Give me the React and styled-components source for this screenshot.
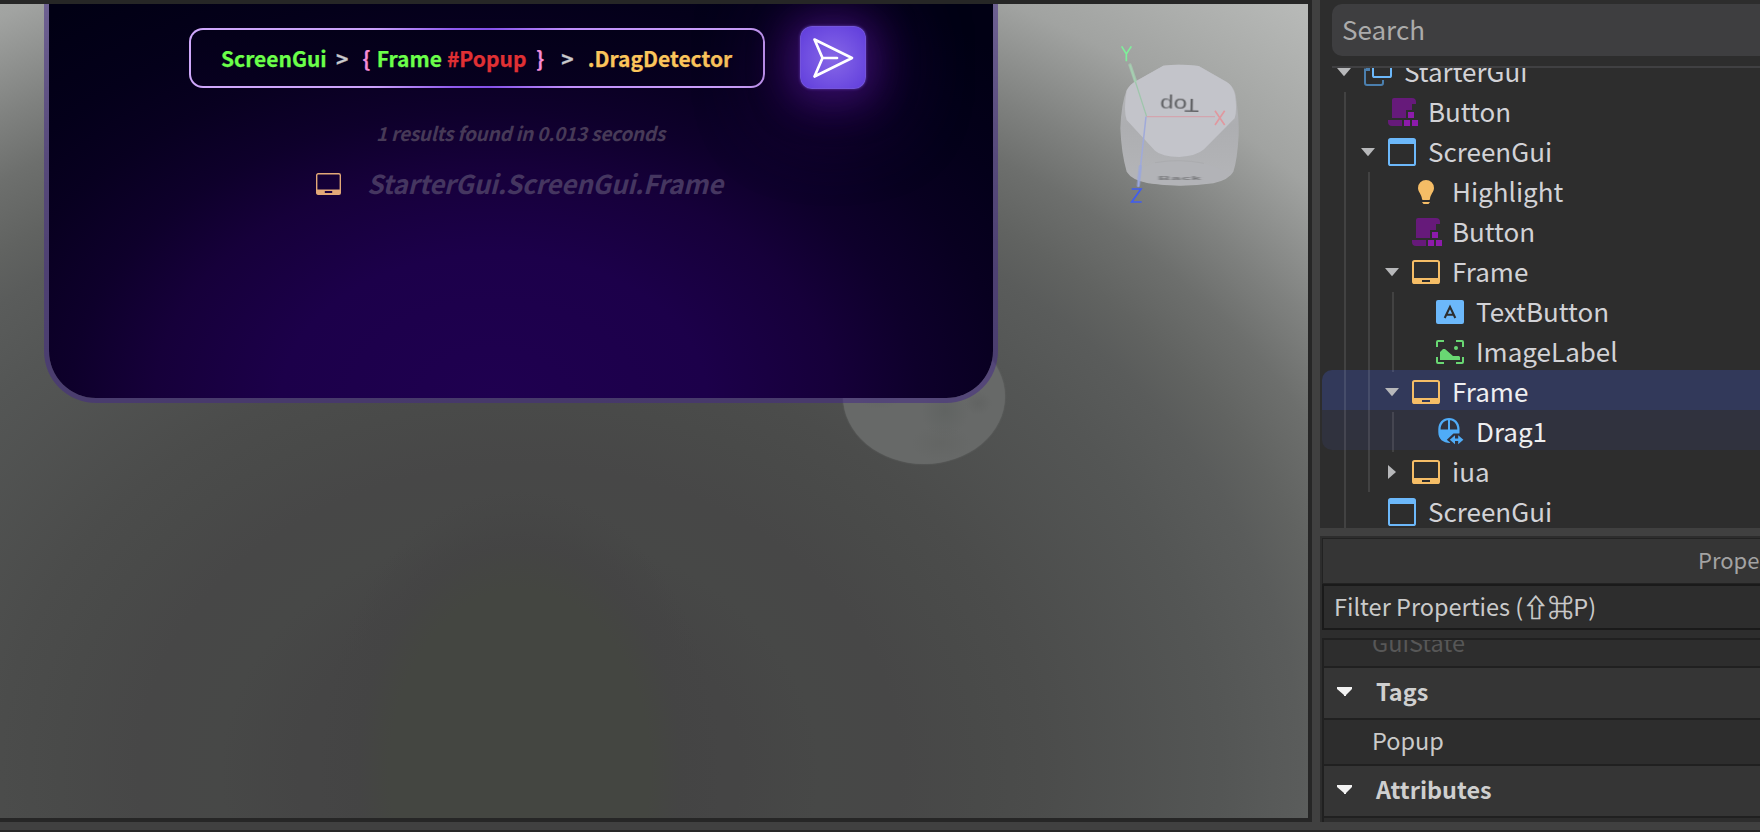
import React from 'react';
import styled, { createGlobalStyle, css } from 'styled-components';

const GlobalStyle = createGlobalStyle`
  * { box-sizing: border-box; }
  body {
    margin: 0;
    overflow: hidden;
    background: #404040;
    font-family: "Noto Sans CJK SC", "Noto Sans", sans-serif;
  }
  svg { display: block; flex: none; }
`;

/* ---------- shell ---------- */

const Shell = styled.div`
  width: 1760px;
  height: 832px;
  display: flex;
  flex-direction: column;
  overflow: hidden;
`;

const Workspace = styled.div`
  height: 822px;
  display: flex;
`;

const StatusEdge = styled.div`
  height: 10px;
  background: #404040;
  border-bottom: 2px solid #282828;
`;

const ViewportFrame = styled.section`
  width: 1312px;
  padding: 4px 4px 4px 0;
  background: #262626;
`;

const Viewport = styled.div`
  position: relative;
  height: 814px;
  overflow: hidden;
  background:
    radial-gradient(ellipse 180px 250px at 520px 766px, #444641 0%, #444641 72%, rgba(68, 68, 68, 0.9) 90%, rgba(70, 70, 70, 0) 112%),
    radial-gradient(
      ellipse 1000px 800px at 520px 766px,
      #454545 0%, #454545 22%, #474847 30%, #474747 38%, #494a49 46%,
      #4b4c4b 52%, #545655 70%, #5a5c5b 78%, #616361 83%, #6d6f6d 90%, #7f817f 96.5%,
      #a1a3a1 107.5%, #b7b9b7 123%
    );
`;

const Moon = styled.div`
  position: absolute;
  left: 843px;
  top: 325px;
  width: 162px;
  height: 135px;
  border-radius: 50%;
  background:
    radial-gradient(ellipse 24px 26px at 102px 82px, rgba(92, 96, 94, 0.6), transparent),
    radial-gradient(ellipse 14px 12px at 135px 74px, rgba(92, 94, 93, 0.5), transparent),
    radial-gradient(ellipse 24px 14px at 36px 66px, rgba(92, 96, 94, 0.5), transparent),
    radial-gradient(ellipse 30px 18px at 98px 114px, rgba(96, 98, 96, 0.5), transparent),
    #676968;
  box-shadow: 0 0 2px #676968;
`;

const ViewCube = styled.svg`
  position: absolute;
  left: 1080px;
  top: 16px;
`;

/* ---------- query panel ---------- */

const QueryPanel = styled.div`
  position: relative;
  width: 954px;
  height: 399px;
  margin-left: 44px;
  padding-top: 22px;
  overflow: hidden;
  border: 5px solid rgba(69, 43, 136, 0.54);
  border-top: 0;
  border-radius: 0 0 52px 52px;
  background: radial-gradient(
      ellipse 530px 360px at 445px 100%,
      #1f0050 0%, #1c004a 40%, #16003a 64%, #0e002b 80%, #080020 97%, #04001a 112%, #010014 135%
    ) padding-box;
`;

const QueryRow = styled.div`
  display: flex;
  align-items: center;
  gap: 35px;
  padding-left: 140px;
  height: 63px;
`;

const QueryInput = styled.div`
  width: 576px;
  height: 60px;
  display: flex;
  align-items: center;
  padding-left: 30px;
  border: 2px solid transparent;
  border-radius: 14px;
  background:
    linear-gradient(#040019, #07001f) padding-box,
    linear-gradient(90deg, #cfa8fb 0%, #cba2fb 32%, #8f5aee 46%, #8450ea 52%, #c08ffb 66%, #cda4fb 100%) border-box;
  font-size: 21px;
  font-weight: 700;
  line-height: 30px;
`;

const tokenColors = {
  cls: '#6bff4a',
  op: '#c9c9cc',
  brace: '#f58bd6',
  tag: '#e03034',
  prop: '#fbc55b',
};

const Token = styled.span`
  flex: none;
  width: ${(p) => p.$w}px;
  color: ${(p) => tokenColors[p.$kind]};
  -webkit-text-stroke: 0.25px currentColor;
  white-space: nowrap;
`;

const SendButton = styled.button`
  width: 66px;
  height: 63px;
  padding: 0;
  display: flex;
  align-items: center;
  justify-content: center;
  border: 1px solid rgba(120, 90, 215, 0.7);
  border-radius: 12px;
  background: radial-gradient(circle at 50% 52%, #8767e6 0%, #7352e2 50%, #5f3cdb 100%);
  box-shadow: 0 0 3px rgba(110, 70, 200, 0.8), 0 3px 38px 9px rgba(84, 22, 150, 0.52), 0 6px 80px 26px rgba(64, 10, 116, 0.4);
`;

const ResultCount = styled.p`
  margin: 29px 0 0 327px;
  font-size: 19px;
  line-height: 30px;
  font-style: italic;
  font-weight: 700;
  color: #473a57;
  letter-spacing: -0.23px;
  white-space: nowrap;
`;

const ResultRow = styled.div`
  display: flex;
  align-items: center;
  gap: 26px;
  height: 40px;
  margin: 16px 0 0 267px;
`;

const ResultPath = styled.span`
  font-size: 26px;
  line-height: 38px;
  padding-bottom: 2px;
  font-style: italic;
  font-weight: 700;
  color: #453660;
  letter-spacing: -0.2px;
  white-space: nowrap;
`;

/* ---------- sidebar ---------- */

const Sidebar = styled.aside`
  width: 448px;
  border-left: 8px solid #404040;
  display: flex;
  flex-direction: column;
  background: #2d2d2d;
  overflow: hidden;
`;

const SearchBox = styled.div`
  flex: none;
  width: 600px;
  height: 52px;
  margin: 4px 0 10px 12px;
  padding-left: 10px;
  border-radius: 10px;
  background: #3e3e40;
  color: #ababab;
  font-size: 26px;
  line-height: 50px;
`;

const Tree = styled.div`
  flex: none;
  height: 462px;
  overflow: hidden;
`;

const TreeTop = styled.div`
  height: 2px;
  margin-left: 12px;
  background: #404042;
`;

const TreeClip = styled.div`
  height: 460px;
  overflow: hidden;
`;

const TreeRows = styled.div`
  margin-top: -18px;
`;

const Row = styled.div`
  height: 40px;
  margin-left: 2px;
  padding: 0 0 0 10px;
  display: flex;
  color: ${(p) => (p.$tone ? '#eeeef0' : '#d2d2d6')};
  ${(p) => p.$tone === 'selected' && css`background: #32395a; border-radius: 10px 0 0 0;`}
  ${(p) => p.$tone === 'child' && css`background: #30323e; border-radius: 0 0 0 10px;`}
`;

const Guide = styled.span`
  position: relative;
  top: 2px;
  flex: none;
  width: 2px;
  height: 40px;
  margin: 0 10px 0 12px;
  background: rgba(255, 255, 255, 0.1);
`;

const ArrowCell = styled.span`
  flex: none;
  width: 32px;
  height: 44px;
  padding-left: 5px;
  display: flex;
  align-items: center;
`;

const IconCell = styled.span`
  flex: none;
  width: 40px;
  padding-top: 8px;
`;

const Label = styled.span`
  font-size: 26px;
  line-height: 41px;
  white-space: nowrap;
`;

/* ---------- properties ---------- */

const Properties = styled.div`
  flex: 1;
  min-height: 0;
  border-top: 8px solid #404040;
  padding: 2px 0 0 2px;
  overflow: hidden;
  display: flex;
  flex-direction: column;
`;

const PropTitle = styled.div`
  flex: none;
  height: 46px;
  padding-left: 375px;
  border: solid #222;
  border-width: 1px 0 1px 1px;
  background: #353535;
  color: #a3a3a3;
  font-size: 22px;
  line-height: 41px;
  overflow: hidden;
`;

const FilterBox = styled.div`
  flex: none;
  height: 46px;
  padding-left: 10px;
  display: flex;
  border: 2px solid #1a1a1a;
  border-right: 0;
  color: #cacaca;
  font-size: 23.5px;
  line-height: 41px;
  white-space: pre;
`;

const Keys = styled.span`
  font-size: 25px;
  -webkit-text-stroke: 0.7px #cacaca;
`;

const PropList = styled.div`
  flex: none;
  height: 184px;
  margin-top: 8px;
  border: solid #202020;
  border-width: 2px 0 0 2px;
  overflow: hidden;
`;

const PropRow = styled.div`
  height: 46px;
  margin-top: ${(p) => (p.$cut ? '-18px' : 0)};
  padding-left: 48px;
  border-bottom: 2px solid #202020;
  color: ${(p) => (p.$cut ? '#575757' : '#cacaca')};
  font-size: 23.5px;
  line-height: 41px;
`;

const PropGroup = styled.div`
  height: 52px;
  padding-left: 13px;
  display: flex;
  gap: 23px;
  border-bottom: 2px solid #202020;
  background: #353535;
  color: #cfcfcf;
  font-size: 23.4px;
  font-weight: 700;
  line-height: 46px;

  svg { margin-top: 19px; }
`;

/* ---------- icons ---------- */

const Glyph = ({ children }) => (
  <svg width="32" height="28" viewBox="0 0 32 28" fill="none">{children}</svg>
);

const FrameGlyph = ({ color = '#f5bd66', hole = '#2d2d2d' }) => (
  <Glyph>
    <rect x="1" y="3" width="26" height="22" rx="1.6" stroke={color} strokeWidth="2" />
    <path d="M1 20h26v5H1z" fill={color} />
    <rect x="10" y="22" width="8" height="2" fill={hole} />
  </Glyph>
);

const ScreenGlyph = () => (
  <Glyph>
    <rect x="1" y="1" width="26" height="26" rx="1.6" stroke="#6cb8fa" strokeWidth="2" />
    <path d="M1 1h26v5H1z" fill="#6cb8fa" />
  </Glyph>
);

const StarterGlyph = () => (
  <Glyph>
    <path d="M6 11.5H1V25q0 2 2 2h14q2 0 2-2v-3" stroke="#4b7fae" strokeWidth="2" />
    <rect x="2" y="10" width="4" height="3" fill="#4b7fae" />
    <rect x="9" y="1" width="18" height="18" rx="1.6" stroke="#6cb8fa" strokeWidth="2" />
  </Glyph>
);

const ScriptGlyph = () => (
  <Glyph>
    <path d="M4 2q0-2 2-2h18q4 0 4 4v2h-4v6h-6v8H4zM0 22h14v6H4q-4 0-4-4z" fill="#661a7a" />
    <path d="M20 14h6v6h-6zM16 22h6v6h-6zM24 22h6v6h-6z" fill="#8d1bab" />
  </Glyph>
);

const BulbGlyph = () => (
  <Glyph>
    <path d="M14 2a8 8 0 0 1 8 8c0 3.8-3.6 6.2-4 11q0 1-1 1h-6q-1 0-1-1c-.4-4.800-4-7.200-4-11a8 8 0 0 1 8-8zM10 24h8l-1.500 2h-5z" fill="#f5bd66" />
  </Glyph>
);

const TextButtonGlyph = () => (
  <Glyph>
    <rect x="0" y="2" width="28" height="24" rx="2" fill="#6cb8fa" />
    <path d="M8.700 20 14 8.900 19.300 20M10.500 16.800h7" stroke="#2d2d2d" strokeWidth="2.100" />
  </Glyph>
);

const ImageGlyph = () => (
  <Glyph>
    <path d="M1 9V4q0-1 1-1h6M20 3h6q1 0 1 1v5M27 19v5q0 1-1 1h-6M8 25H2q-1 0-1-1v-5" stroke="#69d873" strokeWidth="2" />
    <path d="M4 14l3-3h2l8 7h6l1 1v3H4z" fill="#69d873" />
    <circle cx="20" cy="10" r="2" fill="#69d873" />
  </Glyph>
);

const DragGlyph = () => (
  <Glyph>
    <path d="M13 0C19 0 23.500 4.500 23.500 11v4.500L14 25C7 25 2.300 21 2.300 14v-3C2.300 4.500 7 0 13 0z" fill="#4facf8" />
    <path d="M4.600 11.400C4.600 6.500 7.500 2.800 12 2.300v9.100zM14 2.300c4.500.500 7.300 4.200 7.300 9.100H14z" fill="#30323e" />
    <path d="M17.500 15.500h8v12h-8L10.800 21.700z" fill="#30323e" />
    <path d="M13.800 21.700l5.200-4.500v3.300h3.200v-3.300l5.200 4.500-5.200 4.500v-3.300H19v3.300z" fill="#4facf8" />
  </Glyph>
);

const icons = {
  starter: StarterGlyph,
  script: ScriptGlyph,
  screen: ScreenGlyph,
  bulb: BulbGlyph,
  frame: FrameGlyph,
  textButton: TextButtonGlyph,
  image: ImageGlyph,
  drag: DragGlyph,
};

const Arrow = ({ state }) => (
  <svg width="16" height="14" viewBox="0 0 16 14" fill="#b7b8ba">
    {state === 'open' && <path d="M0 3h14L7 11.200z" />}
    {state === 'closed' && <path d="M3 0v14l8-7z" />}
  </svg>
);

const nodes = [
  { depth: 0, icon: 'starter', name: 'StarterGui', arrow: 'open' },
  { depth: 1, icon: 'script', name: 'Button' },
  { depth: 1, icon: 'screen', name: 'ScreenGui', arrow: 'open' },
  { depth: 2, icon: 'bulb', name: 'Highlight' },
  { depth: 2, icon: 'script', name: 'Button' },
  { depth: 2, icon: 'frame', name: 'Frame', arrow: 'open' },
  { depth: 3, icon: 'textButton', name: 'TextButton' },
  { depth: 3, icon: 'image', name: 'ImageLabel' },
  { depth: 2, icon: 'frame', name: 'Frame', arrow: 'open', tone: 'selected' },
  { depth: 3, icon: 'drag', name: 'Drag1', tone: 'child' },
  { depth: 2, icon: 'frame', name: 'iua', arrow: 'closed' },
  { depth: 1, icon: 'screen', name: 'ScreenGui' },
];

const TreeNode = ({ node }) => {
  const Icon = icons[node.icon];
  return (
    <Row $tone={node.tone}>
      {Array.from({ length: node.depth }, (_, i) => <Guide key={i} />)}
      <ArrowCell><Arrow state={node.arrow} /></ArrowCell>
      <IconCell>
        <Icon {...(node.tone === 'selected' ? { hole: '#32395a' } : {})} />
      </IconCell>
      <Label>{node.name}</Label>
    </Row>
  );
};

const Caret = () => (
  <svg width="16" height="10" viewBox="0 0 16 10" fill="#f2f2f2">
    <path d="M0 0h15v2l-6 6v1H7V8L0 2z" />
  </svg>
);

const Cube = () => (
  <ViewCube width="200" height="200" viewBox="0 0 600 600">
    <defs>
      <linearGradient id="side" x1="0" y1="0" x2="0" y2="1">
        <stop offset="0" stopColor="#b9babd" />
        <stop offset=".5" stopColor="#adaeb1" />
        <stop offset="1" stopColor="#b4b5b8" />
      </linearGradient>
      <filter id="soft"><feGaussianBlur stdDeviation="1.8" /></filter>
      <filter id="softer"><feGaussianBlur stdDeviation="2.2" /></filter>
    </defs>
    <g filter="url(#soft)">
      <path d="M250 137Q298 131 356 138L440 186Q462 200 467 225Q478 300 476 345Q472 420 460 455Q448 478 400 490Q300 504 205 490Q155 480 140 455Q124 400 121 325Q124 250 140 210Q150 192 170 182Z" fill="url(#side)" />
      <path d="M250 137Q298 131 356 138L440 186Q458 196 465 225Q472 270 464 295L372 388Q350 408 298 411Q245 410 225 392L140 300Q130 270 140 212Q150 192 170 182Z" fill="#c3c4ca" />
      <path d="M225 428Q298 415 372 430L455 458Q430 486 380 490Q300 502 215 490Q165 482 145 460Z" fill="#b2b3b7" />
      <path d="M225 428Q298 415 372 430" stroke="#abacaf" strokeWidth="3" fill="none" />
    </g>
    <text transform="translate(299 236) rotate(181) scale(1.300 1)" textAnchor="middle" fontFamily="Liberation Sans" fontSize="56" fill="#626366" filter="url(#soft)">Top</text>
    <text transform="translate(300 479) scale(2.300 .8)" textAnchor="middle" fontFamily="Liberation Sans" fontWeight="700" fontSize="22" letterSpacing="1" fill="#737477" filter="url(#softer)">Back</text>
    <path d="M150 135 200 290" stroke="#9fc6ac" strokeWidth="4" />
    <path d="M150 135 166 182" stroke="#a9d9b6" strokeWidth="10" strokeLinecap="round" opacity=".6" />
    <path d="M200 290H405" stroke="#d3a5ae" strokeWidth="4" />
    <path d="M198 290 175 500" stroke="#a0aada" strokeWidth="4.500" />
    <path d="M181 440 175 496" stroke="#98a6e0" strokeWidth="11" strokeLinecap="round" opacity=".55" />
    <g fill="none" strokeWidth="5">
      <path d="M125 79 139 102 154 79M139 102V124" stroke="#7ef09a" />
      <path d="M405 272 434 315M434 272 405 315" stroke="#e0989f" />
      <path d="M155 507H183L155 546H185" stroke="#3f5cf2" />
    </g>
  </ViewCube>
);

export default function App() {
  return (
    <Shell>
      <GlobalStyle />
      <Workspace>
        <ViewportFrame>
          <Viewport>
            <Moon />
            <Cube />
            <QueryPanel>
              <QueryRow>
                <QueryInput>
                  <Token $kind="cls" $w={115}>ScreenGui</Token>
                  <Token $kind="op" $w={26.4}>&gt;</Token>
                  <Token $kind="brace" $w={14.3}>{'{'}</Token>
                  <Token $kind="cls" $w={70.3}>Frame</Token>
                  <Token $kind="tag" $w={89.2}>#Popup</Token>
                  <Token $kind="brace" $w={25}>{'}'}</Token>
                  <Token $kind="op" $w={26.6}>&gt;</Token>
                  <Token $kind="prop" $w={148}>.DragDetector</Token>
                </QueryInput>
                <SendButton aria-label="Run query">
                  <svg width="42" height="42" viewBox="0 0 42 42" fill="none" stroke="#fff" strokeWidth="2.700" strokeLinejoin="round" strokeLinecap="round">
                    <path d="M2.500 2.500 40 21 2.500 39.500 10.500 21zM10.500 21H25" />
                  </svg>
                </SendButton>
              </QueryRow>
              <ResultCount>1 results found in 0.013 seconds</ResultCount>
              <ResultRow>
                <svg width="25" height="22" viewBox="0 0 25 22" fill="none">
                  <rect x=".7" y=".7" width="23.600" height="20.600" rx="1.500" stroke="#e2a877" strokeWidth="1.400" />
                  <path d="M.7 16.500h23.600v4.800H.7z" fill="#e2a877" />
                  <rect x="8.800" y="18" width="7.400" height="2" fill="#1a0040" />
                </svg>
                <ResultPath>StarterGui.ScreenGui.Frame</ResultPath>
              </ResultRow>
            </QueryPanel>
          </Viewport>
        </ViewportFrame>
        <Sidebar>
          <SearchBox>Search</SearchBox>
          <Tree>
            <TreeTop />
            <TreeClip>
              <TreeRows>
                {nodes.map((node, i) => <TreeNode key={i} node={node} />)}
              </TreeRows>
            </TreeClip>
          </Tree>
          <Properties>
            <PropTitle>Properties</PropTitle>
            <FilterBox>Filter Properties (<Keys>⇧⌘</Keys>P)</FilterBox>
            <PropList>
              <PropRow $cut>GuiState</PropRow>
              <PropGroup><Caret />Tags</PropGroup>
              <PropRow>Popup</PropRow>
              <PropGroup><Caret />Attributes</PropGroup>
            </PropList>
          </Properties>
        </Sidebar>
      </Workspace>
      <StatusEdge />
    </Shell>
  );
}
